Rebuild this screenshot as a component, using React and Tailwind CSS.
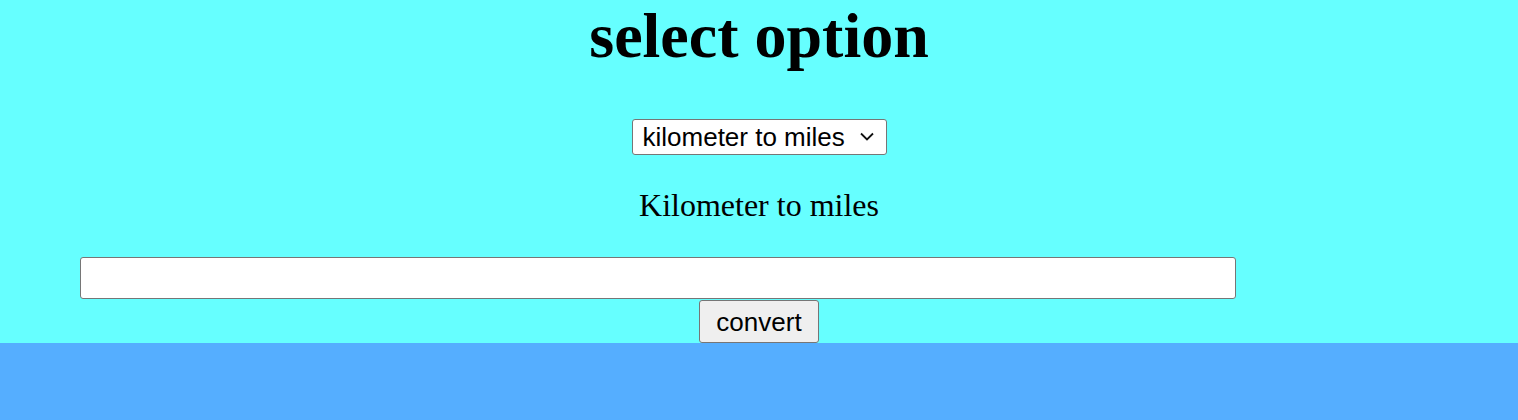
import { useState } from "react";

const App = () => {
  const [option, setOption] = useState("km");
  const [value, setValue] = useState("");

  return (
    <div className="min-h-screen bg-[#55aeff]">
      <div className="bg-[#66ffff] flex flex-col items-center font-['Liberation_Serif',serif] text-black">
        <h1 className="text-[64px] font-bold leading-[71px] m-0">select option</h1>
        <div className="relative mt-[48px]">
          <select
            value={option}
            onChange={(e) => setOption(e.target.value)}
            className="appearance-none h-[36px] w-[255px] bg-white border border-[#767676] rounded-[3px] pl-[10px] pr-[30px] text-[26px] leading-[30px] font-['Liberation_Sans',Arial,sans-serif] text-black outline-none"
          >
            <option value="km">kilometer to miles</option>
            <option value="mi">miles to kilometer</option>
          </select>
          <svg
            className="pointer-events-none absolute right-[13px] top-[13px]"
            width="14"
            height="9"
            viewBox="0 0 14 9"
            fill="none"
          >
            <path d="M1 1.5 7 7.5 13 1.5" stroke="#111" strokeWidth="1.8" />
          </svg>
        </div>
        <p className="mt-[33px] text-[32px] leading-[35px]">
          {option === "km" ? "Kilometer to miles" : "Miles to kilometer"}
        </p>
        <input
          type="text"
          value={value}
          onChange={(e) => setValue(e.target.value)}
          className="self-start ml-[80px] mt-[34px] w-[1156px] h-[42px] bg-white border border-[#767676] rounded-[3px] px-2 text-[24px] font-['Liberation_Sans',Arial,sans-serif] outline-none"
        />
        <button className="mt-[1px] h-[43px] px-[16px] bg-[#efefef] border border-[#767676] rounded-[3px] text-[26px] leading-[30px] font-['Liberation_Sans',Arial,sans-serif] text-black">
          convert
        </button>
      </div>
    </div>
  );
};

export default App;
